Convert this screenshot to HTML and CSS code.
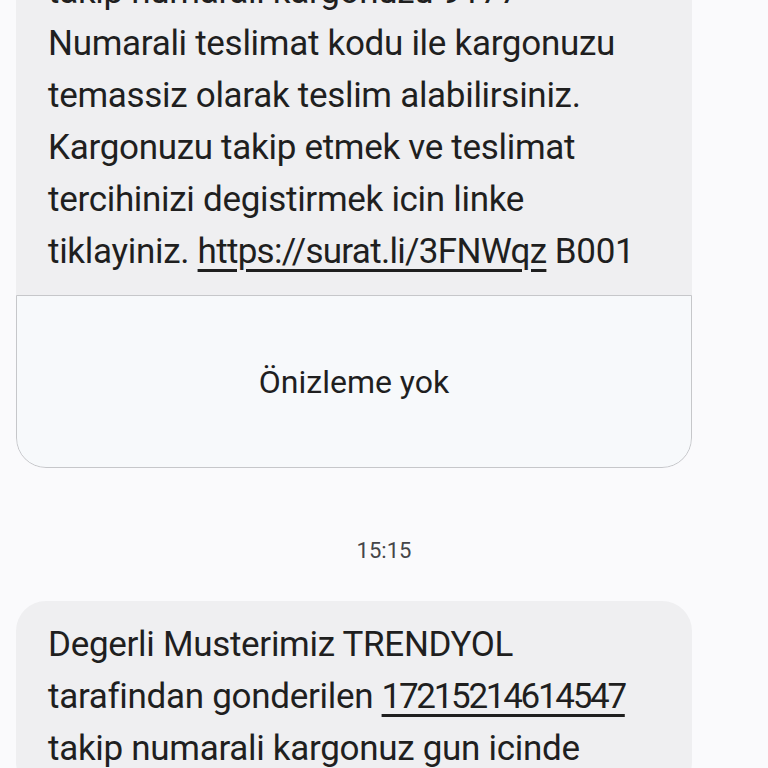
FILE: index.html
```html
<!DOCTYPE html>
<html lang="tr">
    <head>
        <meta charset="UTF-8">
        <meta name="viewport" content="width=device-width, initial-scale=1.0">
        <title>Mesajlar</title>
        <link rel="stylesheet" href="styles.css">
    </head>
    <body>
        <div class="thread">
            <div class="bubble has-preview">
                <p class="msg">
                    takip numarali kargonuzu 9177<br/>
                    Numarali teslimat kodu ile kargonuzu<br/>
                    temassiz olarak teslim alabilirsiniz.<br/>
                    Kargonuzu takip etmek ve teslimat<br/>
                    tercihinizi degistirmek icin linke<br/>
                    tiklayiniz. <a class="link url" href="#">https://surat.li/3FNWqz</a> B001
                </p>
                <div class="preview">Önizleme yok</div>
            </div>

            <div class="stamp">15:15</div>

            <div class="bubble">
                <p class="msg">
                    Degerli Musterimiz TRENDYOL<br/>
                    tarafindan gonderilen <a class="link num" href="#">17215214614547</a><br/>
                    takip numarali kargonuz gun icinde
                </p>
            </div>
        </div>
    </body>
</html>
```

FILE: styles.css
```css
html, body {
    margin: 0;
    padding: 0;
    background-color: #fafafc;
    overflow: hidden;
}
body {
    font-family: Roboto, "Noto Sans", sans-serif;
    color: #1f1f1f;
    height: 768px;
}
.thread {
    display: flex;
    flex-direction: column;
    margin-top: -34px;
}
.bubble {
    margin: 0 76px 0 16px;
    background-color: #efeff1;
    border-radius: 30px;
    overflow: hidden;
}
.has-preview {
    border-radius: 0 0 30px 30px;
}
.msg {
    margin: 0;
    padding: 18px 24px 17px 32px;
    font-size: 35px;
    line-height: 52px;
    letter-spacing: -0.3px;
    white-space: nowrap;
}
.has-preview .msg {
    padding-top: 0;
}
.link {
    color: inherit;
    text-decoration: underline;
    text-decoration-thickness: 2.5px;
    text-underline-offset: 6px;
}
.url {
    letter-spacing: -0.7px;
}
.num {
    letter-spacing: -2.3px;
}
.preview {
    height: 171px;
    display: flex;
    align-items: center;
    justify-content: center;
    background-color: #f7f9fb;
    border: 1px solid #c6c7ca;
    border-radius: 0 0 30px 30px;
    font-size: 32px;
    color: #1f1f1f;
}
.stamp {
    text-align: center;
    font-size: 22px;
    line-height: 28px;
    color: #444548;
    padding: 69px 0 36px 0;
}
```
